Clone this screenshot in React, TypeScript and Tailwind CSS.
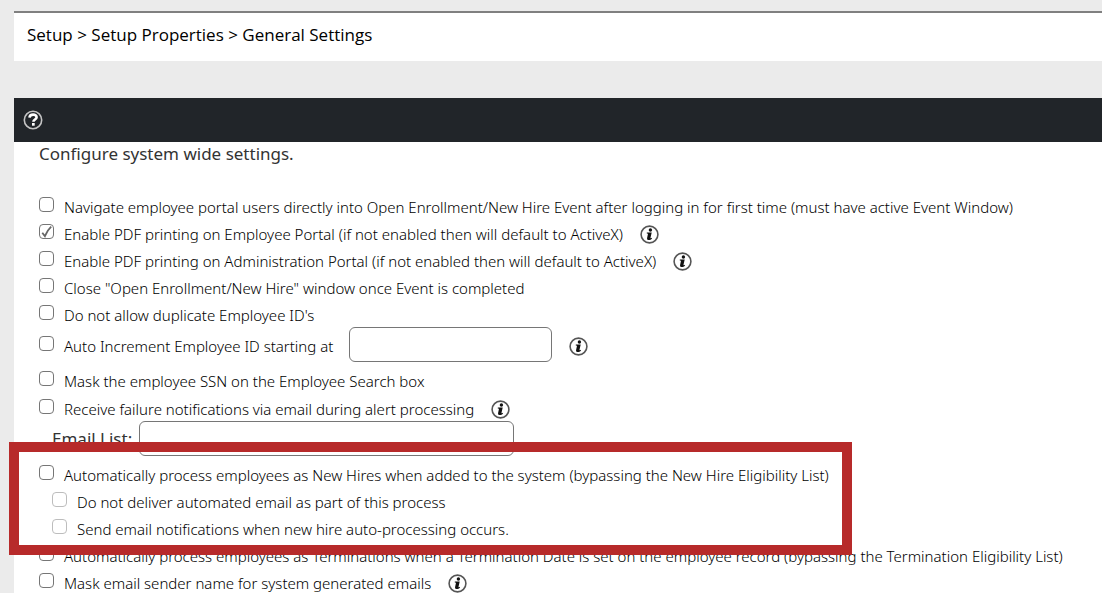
import { FC, ReactNode } from 'react';

interface SettingProps {
  id: string;
  label: string;
  checked?: boolean;
  disabled?: boolean;
  info?: boolean;
  children?: ReactNode;
}

const InfoIcon: FC = () => (
  <svg className="h-[19px] w-[19px]" viewBox="0 0 19 19" fill="none" aria-hidden="true">
    <circle cx="9.5" cy="9.5" r="8.4" stroke="#555" strokeWidth="1.6" />
    <circle cx="10.4" cy="5" r="1.7" fill="#111" />
    <path
      d="M6.8 7.4h4.9l-1.2 5.4c-.1.5.3.6 1.2-.1l.4.8c-1 1-2.1 1.6-3.3 1.6-1.4 0-2-.8-1.7-2.1l.8-3.7c.1-.6-.2-.8-1.1-.8z"
      fill="#111"
    />
  </svg>
);

const HelpIcon: FC = () => (
  <svg className="h-5 w-5" viewBox="0 0 20 20" fill="none" aria-hidden="true">
    <circle cx="10" cy="10" r="8.7" stroke="#c4c4c4" strokeWidth="1.6" />
    <path
      d="M6.5 7.6C6.6 5.5 8.1 4.6 10.1 4.6c2.1 0 3.5 1 3.5 2.7 0 2.3-3.2 2.2-3.2 4.5"
      stroke="#fff"
      strokeWidth="2.6"
    />
    <rect x="9" y="13" width="2.7" height="2.7" fill="#fff" />
  </svg>
);

const InfoButton: FC = () => (
  <button type="button" aria-label="More information" className="ml-[17px] mt-[3px] shrink-0">
    <InfoIcon />
  </button>
);

const Setting: FC<SettingProps> = ({ id, label, checked, disabled, info, children }) => {
  return (
    <div className="flex items-center">
      <div className="flex items-start pt-[3px]">
        <span className="mt-[2px] grid shrink-0">
          <input
            id={id}
            type="checkbox"
            defaultChecked={checked}
            disabled={disabled}
            className="col-start-1 row-start-1 h-[15px] w-[15px] appearance-none rounded-[4px] border border-[#767676] bg-white disabled:border-[#bdbdbd]"
          />
          {checked && (
            <svg
              className="pointer-events-none col-start-1 row-start-1 h-[15px] w-[15px]"
              viewBox="0 0 15 15"
              fill="none"
              aria-hidden="true"
            >
              <path d="M3.3 8.7 5.9 12.200C7.3 8.700 9.400 5.300 12.200 2.700" stroke="#666" strokeWidth="1.8" />
            </svg>
          )}
        </span>
        <label htmlFor={id} className="ml-[10px] whitespace-nowrap leading-6">
          {label}
        </label>
      </div>
      {info && <InfoButton />}
      {children}
    </div>
  );
};

const App: FC = () => {
  return (
    <div className="min-h-screen overflow-hidden bg-[#ebebeb] pl-[14px] pt-[11px] font-['Noto_Sans',sans-serif] text-[15px] font-light text-black">
      <nav className="flex h-[50px] items-center border-t-2 border-[#808080] bg-white pb-1 pl-[13px] font-['Open_Sans',sans-serif] text-[17px] font-normal">
        Setup &gt; Setup Properties &gt; General Settings
      </nav>

      <main className="mt-[37px] min-h-[495px] bg-white">
        <header className="flex h-11 items-center bg-[#212529] pl-[9px]">
          <button type="button" aria-label="Help">
            <HelpIcon />
          </button>
        </header>

        <div className="pl-[25px]">
          <p className="mb-[26px] text-[17px] font-normal leading-6 text-[#333]">Configure system wide settings.</p>

          <Setting
            id="navigate"
            label="Navigate employee portal users directly into Open Enrollment/New Hire Event after logging in for first time (must have active Event Window)"
          />
          <Setting
            id="pdf-employee"
            label="Enable PDF printing on Employee Portal (if not enabled then will default to ActiveX)"
            checked
            info
          />
          <Setting
            id="pdf-admin"
            label="Enable PDF printing on Administration Portal (if not enabled then will default to ActiveX)"
            info
          />
          <Setting id="close-window" label={'Close "Open Enrollment/New Hire" window once Event is completed'} />
          <Setting id="duplicate-ids" label="Do not allow duplicate Employee ID's" />
          <Setting id="auto-increment" label="Auto Increment Employee ID starting at">
            <input
              type="text"
              aria-label="Starting Employee ID"
              className="ml-4 h-[35px] w-[203px] rounded-[6px] border border-[#767676] bg-white px-2"
            />
            <InfoButton />
          </Setting>

          <div className="mt-1">
            <Setting id="mask-ssn" label="Mask the employee SSN on the Employee Search box" />
          </div>
          <div className="mt-px">
            <Setting
              id="failure-notifications"
              label="Receive failure notifications via email during alert processing"
              info
            />
          </div>
          <div className="flex items-center pl-[13px]">
            <label htmlFor="email-list" className="w-[87px] text-[17px] font-normal text-[#333]">
              Email List:
            </label>
            <input
              id="email-list"
              type="text"
              className="h-[35px] w-[375px] rounded-[6px] border border-[#767676] bg-white px-2"
            />
          </div>

          <div className="relative mt-1">
            <Setting
              id="new-hires"
              label="Automatically process employees as New Hires when added to the system (bypassing the New Hire Eligibility List)"
            />
            <div className="pl-[13px]">
              <Setting id="no-email" label="Do not deliver automated email as part of this process" disabled />
              <Setting
                id="send-email"
                label="Send email notifications when new hire auto-processing occurs."
                disabled
              />
            </div>
            {/* highlight frame, overlaps the rows around it */}
            <div className="pointer-events-none absolute -bottom-[14px] -left-[30px] -top-[18px] z-10 w-[843px] border-[10px] border-[#b72a2a]" />
          </div>
          <Setting
            id="terminations"
            label="Automatically process employees as Terminations when a Termination Date is set on the employee record (bypassing the Termination Eligibility List)"
          />
          <Setting id="mask-sender" label="Mask email sender name for system generated emails" info />
        </div>
      </main>
    </div>
  );
};

export default App;
